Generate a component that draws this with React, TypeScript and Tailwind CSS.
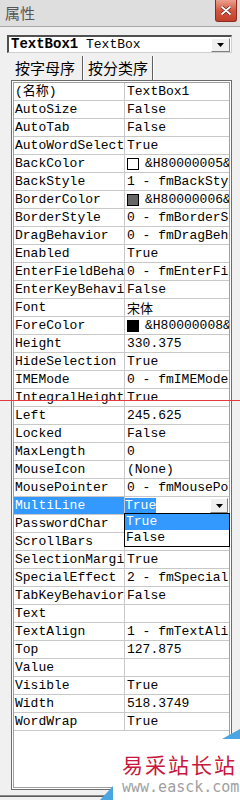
const rows: { name: string; value: string; swatch?: string; cjk?: boolean }[] = [
  { name: '(名称)', value: 'TextBox1' },
  { name: 'AutoSize', value: 'False' },
  { name: 'AutoTab', value: 'False' },
  { name: 'AutoWordSelect', value: 'True' },
  { name: 'BackColor', value: '&H80000005&', swatch: '#ffffff' },
  { name: 'BackStyle', value: '1 - fmBackStyleOpaque' },
  { name: 'BorderColor', value: '&H80000006&', swatch: '#666666' },
  { name: 'BorderStyle', value: '0 - fmBorderStyleNone' },
  { name: 'DragBehavior', value: '0 - fmDragBehaviorDisabled' },
  { name: 'Enabled', value: 'True' },
  { name: 'EnterFieldBehavior', value: '0 - fmEnterFieldBehaviorSelectAll' },
  { name: 'EnterKeyBehavior', value: 'False' },
  { name: 'Font', value: '宋体', cjk: true },
  { name: 'ForeColor', value: '&H80000008&', swatch: '#000000' },
  { name: 'Height', value: '330.375' },
  { name: 'HideSelection', value: 'True' },
  { name: 'IMEMode', value: '0 - fmIMEModeNoControl' },
  { name: 'IntegralHeight', value: 'True' },
  { name: 'Left', value: '245.625' },
  { name: 'Locked', value: 'False' },
  { name: 'MaxLength', value: '0' },
  { name: 'MouseIcon', value: '(None)' },
  { name: 'MousePointer', value: '0 - fmMousePointerDefault' },
  { name: 'MultiLine', value: 'True' },
  { name: 'PasswordChar', value: '' },
  { name: 'ScrollBars', value: '2 - fmScrollBarsVertical' },
  { name: 'SelectionMargin', value: 'True' },
  { name: 'SpecialEffect', value: '2 - fmSpecialEffectSunken' },
  { name: 'TabKeyBehavior', value: 'False' },
  { name: 'Text', value: '' },
  { name: 'TextAlign', value: '1 - fmTextAlignLeft' },
  { name: 'Top', value: '127.875' },
  { name: 'Value', value: '' },
  { name: 'Visible', value: 'True' },
  { name: 'Width', value: '518.3749' },
  { name: 'WordWrap', value: 'True' },
]

function DownArrow() {
  return (
    <svg width="7" height="4" viewBox="0 0 7 4">
      <polygon points="0,0 7,0 3.5,4" fill="#000" />
    </svg>
  )
}

function PropRow({ name, value, swatch, cjk }: { name: string; value: string; swatch?: string; cjk?: boolean }) {
  const selected = name === 'MultiLine'
  return (
    <div className="relative flex h-[18px] border-b border-[#c8c8c8]">
      <div
        className={`w-[111px] shrink-0 border-r border-[#c8c8c8] pl-[1px] overflow-hidden whitespace-nowrap leading-[17px] ${
          selected ? 'bg-[#3399ff] text-white' : 'text-black'
        }`}
      >
        {name}
      </div>
      {selected ? (
        <div className="flex-1 flex items-center h-[17px] pr-[1px]">
          <span className="bg-[#3399ff] text-white leading-[15px] h-[15px]">True</span>
          <div className="ml-auto w-[18px] h-[15px] flex items-center justify-center bg-[#f0f0f0] border-t border-l border-t-white border-l-white border-r border-b border-r-[#808080] border-b-[#808080]">
            <DownArrow />
          </div>
          <div className="absolute z-10 left-[110px] top-[16px] w-[106px] h-[34px] border border-black bg-white">
            <div className="h-[16px] leading-[16px] pl-[1px] bg-[#3399ff] text-white">True</div>
            <div className="h-[16px] leading-[16px] pl-[1px] text-black">False</div>
          </div>
        </div>
      ) : (
        <div className="flex-1 flex items-center h-[17px] pl-[2px] overflow-hidden whitespace-nowrap leading-[17px] text-black">
          {swatch && (
            <span
              className="w-[12px] h-[12px] shrink-0 border border-black mr-[6px]"
              style={{ backgroundColor: swatch }}
            />
          )}
          <span className={cjk ? "font-['Noto_Sans_CJK_SC',sans-serif] leading-[17px] h-[17px]" : 'leading-[17px]'}>{value}</span>
        </div>
      )}
    </div>
  )
}

export default function App() {
  return (
    <div className="relative w-[240px] h-[800px] overflow-hidden bg-[#f0f0f0] flex flex-col font-['Liberation_Mono','Noto_Sans_CJK_SC',monospace] text-[13px]">
      {/* title bar */}
      <div className="h-[27px] shrink-0 flex justify-between bg-[#dedede] border-b border-[#a8a8a8]">
        <span className="pl-[5px] pt-[3px] text-[15px] leading-[20px] text-[#555] font-['Noto_Sans_CJK_SC',sans-serif]">属性</span>
        <div className="mr-[3px] w-[22px] h-[22px] flex items-center justify-center rounded-b-[3px] border border-t-0 border-[#8c2a1e] bg-gradient-to-b from-[#eaa08f] via-[#d4553f] to-[#c2402b]">
          <svg width="10" height="9" viewBox="0 0 10 9">
            <path d="M1 1 L9 8 M9 1 L1 8" stroke="#5a1a10" strokeWidth="3.2" strokeLinecap="round" />
            <path d="M1 1 L9 8 M9 1 L1 8" stroke="#fff" strokeWidth="1.8" strokeLinecap="round" />
          </svg>
        </div>
      </div>

      {/* object combo */}
      <div className="mt-[8px] ml-[7px] w-[225px] h-[18px] shrink-0 flex items-center bg-white border-t-2 border-l-2 border-r border-b border-t-[#505050] border-l-[#505050] border-r-[#cfcfcf] border-b-[#cfcfcf]">
        <span className="pl-[2px] whitespace-nowrap text-black leading-[15px]">
          <b className="text-[14px]">TextBox1</b> TextBox
        </span>
        <div className="ml-auto mr-[1px] w-[19px] h-[14px] flex items-center justify-center bg-[#f0f0f0] border-t border-l border-t-white border-l-white border-r border-b border-r-[#808080] border-b-[#808080]">
          <DownArrow />
        </div>
      </div>

      {/* tabs */}
      <div className="mt-[3px] h-[24px] shrink-0 flex pl-[11px] font-['Noto_Sans_CJK_SC',sans-serif] text-[15px] text-black">
        <div className="w-[72px] pl-[4px] pt-[2px] leading-[20px] border-r border-[#5e5e5e] shadow-[1px_0_0_#ffffff]">按字母序</div>
        <div className="w-[70px] pl-[5px] pt-[2px] leading-[20px] border-r border-[#5e5e5e] shadow-[1px_0_0_#ffffff]">按分类序</div>
      </div>

      {/* property grid */}
      <div className="ml-[11px] w-[221px] h-[710px] shrink-0 border border-[#6d6d6d]">
        <div className="h-full border border-white">
          <div className="h-full border border-[#a0a0a0] bg-white">
            {rows.map((r) => (
              <PropRow key={r.name} {...r} />
            ))}
          </div>
        </div>
      </div>

      <div className="mt-[5px] h-[2px] shrink-0 border-t border-[#8a8a8a] border-b border-b-[#5a5a5a]" />

      {/* guide line */}
      <div className="absolute left-0 top-[400px] w-full h-px bg-[#e0393e]" />

      {/* watermark */}
      <div className="absolute left-[112px] top-[738px] w-[128px] h-[62px] bg-white pl-[10px] pt-[14px]">
        <div className="font-['Noto_Sans_CJK_SC',sans-serif] text-[21px] leading-[24px] tracking-[2px] text-[#c8163c]">易采站长站</div>
        <div className="mt-[3px] font-['DejaVu_Sans_Mono',monospace] text-[15px] leading-[16px] text-[#a0a0a0]">www.easck.com</div>
      </div>
      <svg className="absolute left-[222px] top-[729px]" width="18" height="10" viewBox="0 0 18 10">
        <polygon points="18,0 18,10 0,10" fill="#4aa6e0" />
      </svg>
      <svg className="absolute left-[100px] top-[786px]" width="13" height="14" viewBox="0 0 13 14">
        <polygon points="13,0 13,14 0,14" fill="#4aa6e0" />
      </svg>
    </div>
  )
}
